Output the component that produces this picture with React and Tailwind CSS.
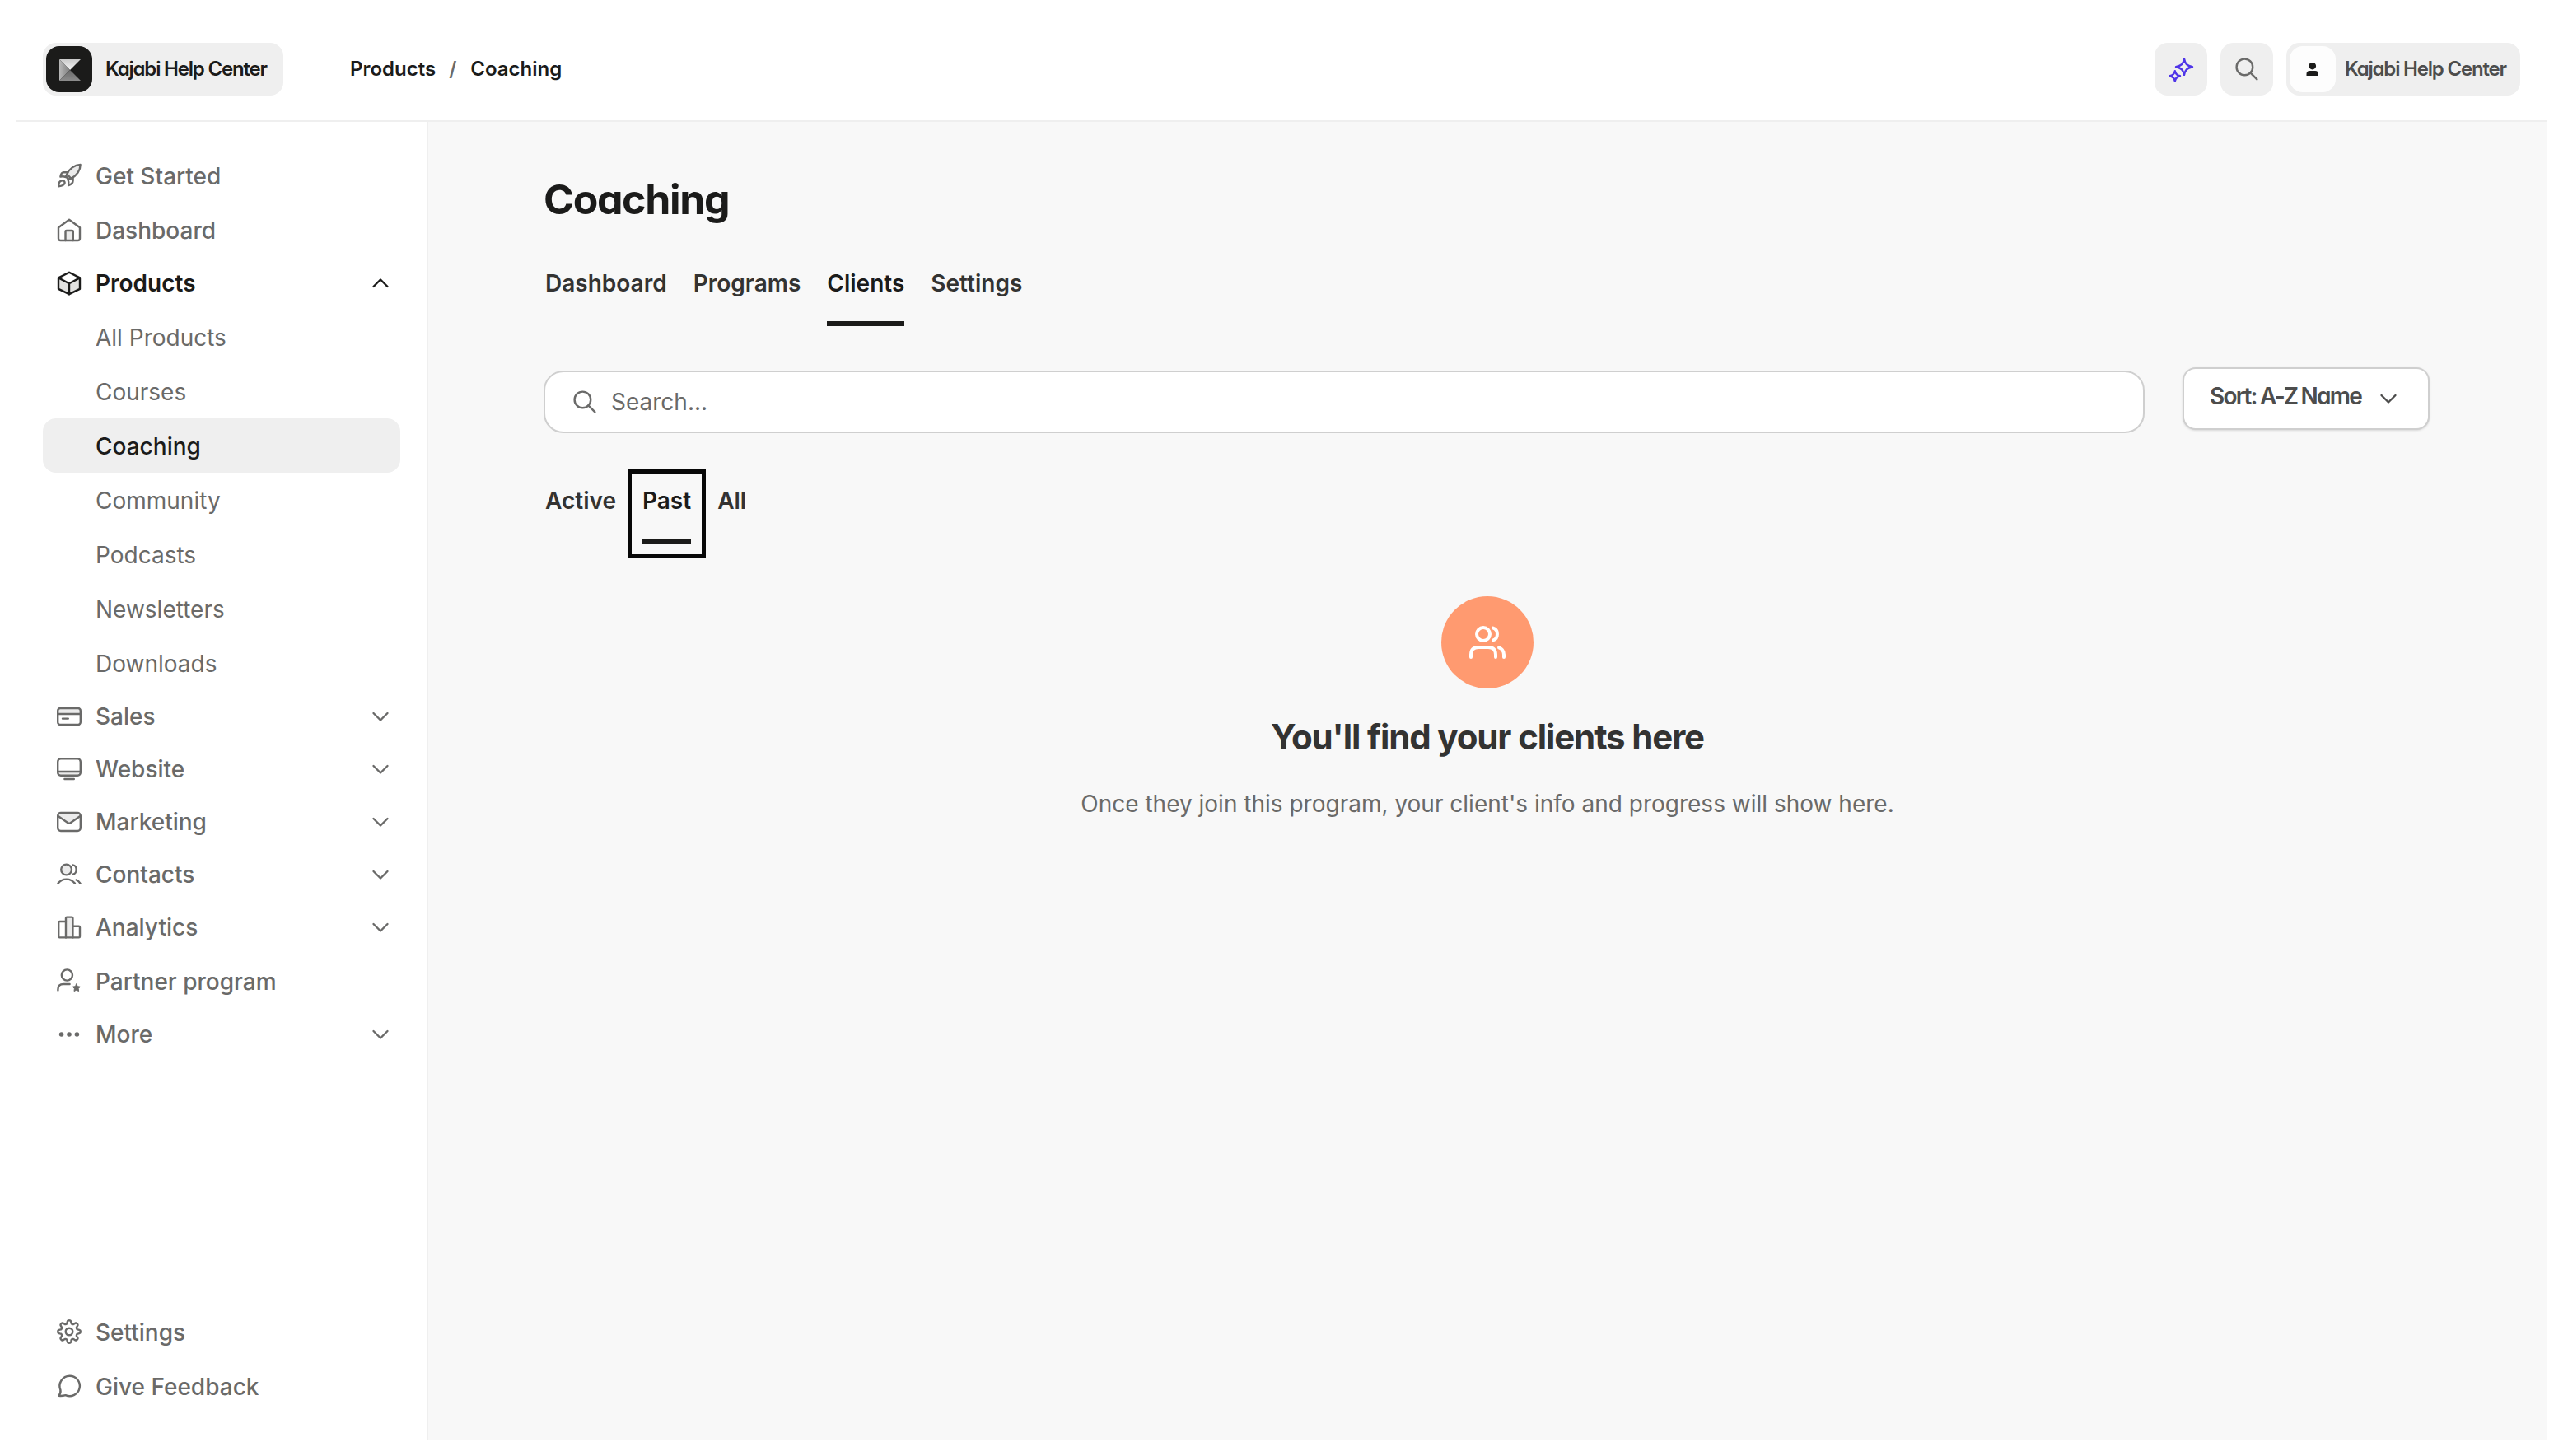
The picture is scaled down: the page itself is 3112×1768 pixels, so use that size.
const INK = '#1b1b1a';
const FILL = '#ebebeb';

function Svg({ children, className = 'size-8' }) {
  return (
    <svg viewBox="0 0 32 32" className={`${className} shrink-0`} fill="none" stroke="currentColor" strokeWidth="2.4" strokeLinecap="round" strokeLinejoin="round">
      {children}
    </svg>
  );
}

const Rocket = () => (
  <Svg>
    <path d="M13.3 14.6C16 8 22.5 3.2 29.6 3C29.6 9.7 25.3 16.3 18.2 19.6Z" fill={FILL} />
    <path d="M14 12.2H9.4C7.3 12.2 6 14 5.4 17.6C7.8 16.8 10 17.2 12.2 18.2" />
    <path d="M20.6 18.4V22.6C20.6 25.2 18.6 27 15.2 28C15.8 25 15.3 22.8 14.4 20.6" />
    <path d="M13.3 14.6L12 17.2L15.4 20.6L18.2 19.6" />
    <path d="M3.2 29.2C3 25.6 4.2 22.2 7.6 22.2C9.6 22.2 10.8 23.6 10.6 25.2C10.2 28 7 29 3.2 29.2Z" />
  </Svg>
);

const Home = () => (
  <Svg>
    <path d="M11.5 29V18.2Q11.5 17 12.7 17H19.6Q20.8 17 20.8 18.2V29" fill={FILL} />
    <path d="M3 13.2L16 3.8L29 13.2V26.5Q29 29 26.5 29H5.5Q3 29 3 26.5Z" />
  </Svg>
);

const Box = () => (
  <Svg>
    <path d="M3 9.6L16 16.4L29 9.6V23.2L16 29.4L3 23.2Z" fill="#e2e2e0" stroke="none" />
    <path d="M16 2.8L29 9.4V22.8L16 29.2L3 22.8V9.4Z" />
    <path d="M3 9.4L16 16.2L29 9.4M16 16.2V29.2" />
  </Svg>
);

const Card = () => (
  <Svg>
    <path d="M3 7H29V13H3Z" fill={FILL} stroke="none" />
    <rect x="2.2" y="6" width="27.6" height="20" rx="3" />
    <path d="M2.5 13H29.5M8 18.6H14.8" />
  </Svg>
);

const Monitor = () => (
  <Svg>
    <path d="M3 19H29V23H3Z" fill={FILL} stroke="none" />
    <rect x="2.2" y="3.3" width="27.6" height="20.5" rx="3.6" />
    <path d="M2.5 19H29.5M10.4 28H21.8" />
  </Svg>
);

const Mail = () => (
  <Svg>
    <path d="M3 9.2L5.5 5.6H26.5L29 9.2L16 17.8Z" fill={FILL} stroke="none" />
    <rect x="2.2" y="5" width="27.6" height="22" rx="3.6" />
    <path d="M3 9.2L14.5 17.2Q16 18.2 17.5 17.2L29 9.2" />
  </Svg>
);

const People = () => (
  <Svg>
    <circle cx="12.6" cy="10" r="6.4" fill={FILL} />
    <path d="M2.4 26.8C7.5 19.9 17.8 19.9 23 26.8" />
    <path d="M20.6 4.4C26 4.6 26 15.2 20.6 15.6" />
    <path d="M24.6 22.4C26.6 23.3 28.3 24.7 29.6 26.8" />
  </Svg>
);

const Bars = () => (
  <Svg>
    <path d="M12 28.4V4.8Q12 3.6 13.2 3.6H19.2Q20.4 3.6 20.4 4.8V28.4" fill={FILL} />
    <path d="M12 9H4.4Q3.2 9 3.2 10.2V27.2Q3.2 28.4 4.4 28.4H27.8Q29 28.4 29 27.2V16Q29 14.8 27.8 14.8H20.4" />
  </Svg>
);

const Partner = () => (
  <Svg>
    <circle cx="13.4" cy="9" r="6.6" />
    <path d="M2.4 27.4V26.4Q2.4 20 9 20H16.6" />
    <path d="M24.8 19.9L26.3 22.7L29.4 23.2L27.2 25.5L27.6 28.5L24.8 27.2L22 28.5L22.4 25.5L20.2 23.2L23.3 22.7Z" fill="currentColor" strokeWidth="1" />
  </Svg>
);

const Dots = () => (
  <Svg>
    <g fill="currentColor" stroke="none">
      <circle cx="6.6" cy="16" r="2.8" />
      <circle cx="16" cy="16" r="2.8" />
      <circle cx="25.4" cy="16" r="2.8" />
    </g>
  </Svg>
);

function gearPath() {
  const n = 96;
  const pts = [];
  for (let i = 0; i < n; i++) {
    const a = (i / n) * Math.PI * 2;
    const wave = Math.tanh(2 * Math.cos(8 * a)) / Math.tanh(2);
    const r = 11.8 + 1.9 * wave;
    pts.push(`${(16 + r * Math.sin(a)).toFixed(2)} ${(16 - r * Math.cos(a)).toFixed(2)}`);
  }
  return `M${pts.join('L')}Z`;
}

const Gear = () => (
  <Svg>
    <path d={gearPath()} />
    <circle cx="16" cy="16" r="4.3" />
  </Svg>
);

const Chat = () => (
  <Svg>
    <path d="M16.6 3.8A12.2 12.2 0 1 1 11.6 27.1C9 28 6.2 28 3.4 27.9C5 25.8 5.9 23.3 5.4 20.7A12.2 12.2 0 0 1 16.6 3.8Z" />
  </Svg>
);

const Search = ({ className }) => (
  <Svg className={className}>
    <circle cx="13.4" cy="13.4" r="9.8" />
    <path d="M20.4 20.4L28.4 28.4" />
  </Svg>
);

const Chevron = ({ up }) => (
  <Svg>
    <path d={up ? 'M7.5 20L16 11.5L24.5 20' : 'M7.5 12L16 20.5L24.5 12'} />
  </Svg>
);

const Sparkles = () => (
  <Svg className="size-8 text-[#4f35e8]">
    <path d="M20 3.5C21.2 9.5 23.2 11.9 30 13.2C23.2 14.5 21.2 16.9 20 22.9C18.8 16.9 16.8 14.5 10 13.2C16.8 11.9 18.8 9.5 20 3.5Z" />
    <path d="M8.8 18.2C9.6 22 11 23.5 15 24.3C11 25.1 9.6 26.6 8.8 30.4C8 26.6 6.6 25.1 2.6 24.3C6.6 23.5 8 22 8.8 18.2Z" />
  </Svg>
);

const Logo = () => (
  <div className="flex size-14 items-center justify-center rounded-2xl bg-[#1b1b1a] pt-0.5 pl-0.5">
    <svg viewBox="0 0 26 26" className="size-[26px]">
      <defs>
        <linearGradient id="kTop" x1="0" y1="0" x2="0" y2="1">
          <stop offset="0" stopColor="#c9c9c9" />
          <stop offset="1" stopColor="#f5f5f5" />
        </linearGradient>
        <linearGradient id="kLeft" x1="0" y1="0" x2="1" y2="0">
          <stop offset="0" stopColor="#b8b8b8" />
          <stop offset="1" stopColor="#7c7c7c" />
        </linearGradient>
        <linearGradient id="kBottom" x1="0" y1="0" x2="0" y2="1">
          <stop offset="0" stopColor="#686868" />
          <stop offset="1" stopColor="#8c8c8c" />
        </linearGradient>
      </defs>
      <path d="M0 0H26L13 13Z" fill="url(#kTop)" />
      <path d="M0 0L13 13L0 26Z" fill="url(#kLeft)" />
      <path d="M13 13L26 26H0Z" fill="url(#kBottom)" />
    </svg>
  </div>
);

const NAV = [
  { label: 'Get Started', icon: Rocket },
  { label: 'Dashboard', icon: Home },
  {
    label: 'Products',
    icon: Box,
    open: true,
    children: ['All Products', 'Courses', 'Coaching', 'Community', 'Podcasts', 'Newsletters', 'Downloads'],
  },
  { label: 'Sales', icon: Card, group: true },
  { label: 'Website', icon: Monitor, group: true },
  { label: 'Marketing', icon: Mail, group: true },
  { label: 'Contacts', icon: People, group: true },
  { label: 'Analytics', icon: Bars, group: true },
  { label: 'Partner program', icon: Partner },
  { label: 'More', icon: Dots, group: true },
];

function NavItem({ label, icon: Icon, group, open }) {
  const expandable = group || open;
  return (
    <a
      className={`flex items-center gap-4 rounded-2xl pl-4 pr-2 ${expandable ? 'h-16' : 'h-[66px]'} ${open ? 'font-semibold text-[#1b1b1a]' : 'font-medium text-[#6a6a69]'}`}
    >
      <Icon />
      <span className={`flex-1 ${expandable ? '' : 'pt-0.5'}`}>{label}</span>
      {expandable && <Chevron up={open} />}
    </a>
  );
}

function SubItem({ label }) {
  const active = label === 'Coaching';
  return (
    <a className={`flex h-[66px] items-center rounded-2xl pt-0.5 pl-16 ${active ? 'bg-[#efefef] font-medium text-[#1b1b1a]' : 'text-[#6a6a69]'}`}>
      {label}
    </a>
  );
}

function Tabs({ items, active, className }) {
  return (
    <div className={`flex gap-8 text-[28px] leading-[42px] font-semibold ${className}`}>
      {items.map((t) => (
        <div key={t} className={`relative ${t === active ? 'text-[#1b1b1a]' : 'text-[#333332]'}`}>
          {t}
          {t === active && <div className="mt-[25px] h-1.5 bg-[#1b1b1a]" />}
          {t === 'Past' && <div className="absolute -top-[17px] -left-[18px] h-[108px] w-[95px] border-5 border-[#080808]" />}
        </div>
      ))}
    </div>
  );
}

export default function App() {
  return (
    <div className="h-[1768px] w-[3112px] overflow-hidden bg-white p-5 font-['Inter',sans-serif]">
      <div className="flex h-full flex-col">
        <header className="flex h-32 shrink-0 items-center justify-between border-b-2 border-[#efefef] pt-0.5 pr-8 pl-8">
          <div className="flex items-center">
            <div className="flex h-16 w-[292px] items-center gap-4 rounded-2xl bg-[#efefef] pl-1">
              <Logo />
              <span className="text-2xl font-semibold tracking-[-0.05em] whitespace-nowrap text-[#1b1b1a] [font-feature-settings:'cv11']">Kajabi Help Center</span>
            </div>
            <nav className="ml-[81px] flex items-center text-2xl font-semibold text-[#1b1b1a]">
              <span>Products</span>
              <span className="mr-[17px] ml-4 text-[#6a6a69]">/</span>
              <span>Coaching</span>
            </nav>
          </div>
          <div className="flex gap-4">
            <div className="flex size-16 items-center justify-center rounded-2xl bg-[#efefef]">
              <Sparkles />
            </div>
            <div className="flex size-16 items-center justify-center rounded-2xl bg-[#efefef] text-[#6a6a69]">
              <Search />
            </div>
            <div className="flex h-16 w-[284px] items-center gap-[11px] rounded-2xl bg-[#efefef] pl-1">
              <div className="flex size-14 items-center justify-center rounded-2xl bg-[#fdfdfd]">
                <svg viewBox="0 0 16 16" className="size-4" fill={INK}>
                  <circle cx="7.7" cy="4" r="4.4" />
                  <path d="M0.5 16V14Q0.5 10 4.5 10H11Q15 10 15 14V16Z" />
                </svg>
              </div>
              <span className="text-2xl font-semibold tracking-[-0.05em] whitespace-nowrap text-[#4d4d4c] [font-feature-settings:'cv11']">Kajabi Help Center</span>
            </div>
          </div>
        </header>
        <div className="flex min-h-0 flex-1">
          <aside className="flex w-[500px] shrink-0 flex-col justify-between border-r-2 border-[#efefef] pt-8 pr-8 pb-8 pl-8 text-[28px] leading-[42px]">
            <nav>
              {NAV.map((n) => (
                <div key={n.label}>
                  <NavItem {...n} />
                  {n.children && n.children.map((c) => <SubItem key={c} label={c} />)}
                </div>
              ))}
            </nav>
            <nav>
              <NavItem label="Settings" icon={Gear} />
              <NavItem label="Give Feedback" icon={Chat} />
            </nav>
          </aside>
          <main className="flex flex-1 flex-col bg-[#f8f8f8] pt-16 pr-[142px] pl-[140px]">
            <h1 className="text-[50px] leading-[60px] font-bold tracking-[-0.027em] text-[#1b1b1a] [font-feature-settings:'cv11']">Coaching</h1>
            <Tabs items={['Dashboard', 'Programs', 'Clients', 'Settings']} active="Clients" className="mt-[51px] ml-0.5 h-[73px]" />
            <div className="mt-[50px] flex items-start gap-[46px]">
              <div className="mt-1 flex h-[76px] flex-1 items-center rounded-3xl border-2 border-[#cfcfcf] bg-white pl-8 text-[28px] text-[#6a6a69]">
                <Search />
                <span className="ml-4">Search...</span>
              </div>
              <div className="flex h-[76px] w-[300px] items-center justify-between rounded-2xl border-2 border-[#cfcfcf] bg-white pr-8 pl-[31px] shadow-sm">
                <span className="-mt-1.5 text-[28px] font-semibold tracking-[-0.064em] whitespace-nowrap text-[#4d4d4c] [font-feature-settings:'cv11'] [word-spacing:-1px]">Sort: A-Z Name</span>
                <span className="text-[#4d4d4c]">
                  <Chevron />
                </span>
              </div>
            </div>
            <Tabs items={['Active', 'Past', 'All']} active="Past" className="mt-[61px] ml-0.5 h-[73px]" />
            <section className="mt-16 ml-0.5 flex flex-col items-center">
              <div className="flex size-28 items-center justify-center rounded-full bg-[#ff9a70]">
                <svg viewBox="0 0 48 48" className="size-12" fill="none" stroke="#ffffff" strokeWidth="4" strokeLinecap="round" strokeLinejoin="round">
                  <circle cx="19" cy="14" r="8" />
                  <path d="M4 42V39Q4 30 13 30H25Q34 30 34 39V42" />
                  <path d="M31 6.6C37.6 8.6 37.6 19.6 31 21.4" />
                  <path d="M38 30.4Q44 32.6 44 39V42" />
                </svg>
              </div>
              <h2 className="mt-[31px] text-[42px] leading-[56px] font-bold tracking-[-0.027em] text-[#333332] [font-feature-settings:'cv11']">You'll find your clients here</h2>
              <p className="mt-8 text-[28px] leading-[42px] text-[#6a6a69]">Once they join this program, your client's info and progress will show here.</p>
            </section>
          </main>
        </div>
      </div>
    </div>
  );
}
